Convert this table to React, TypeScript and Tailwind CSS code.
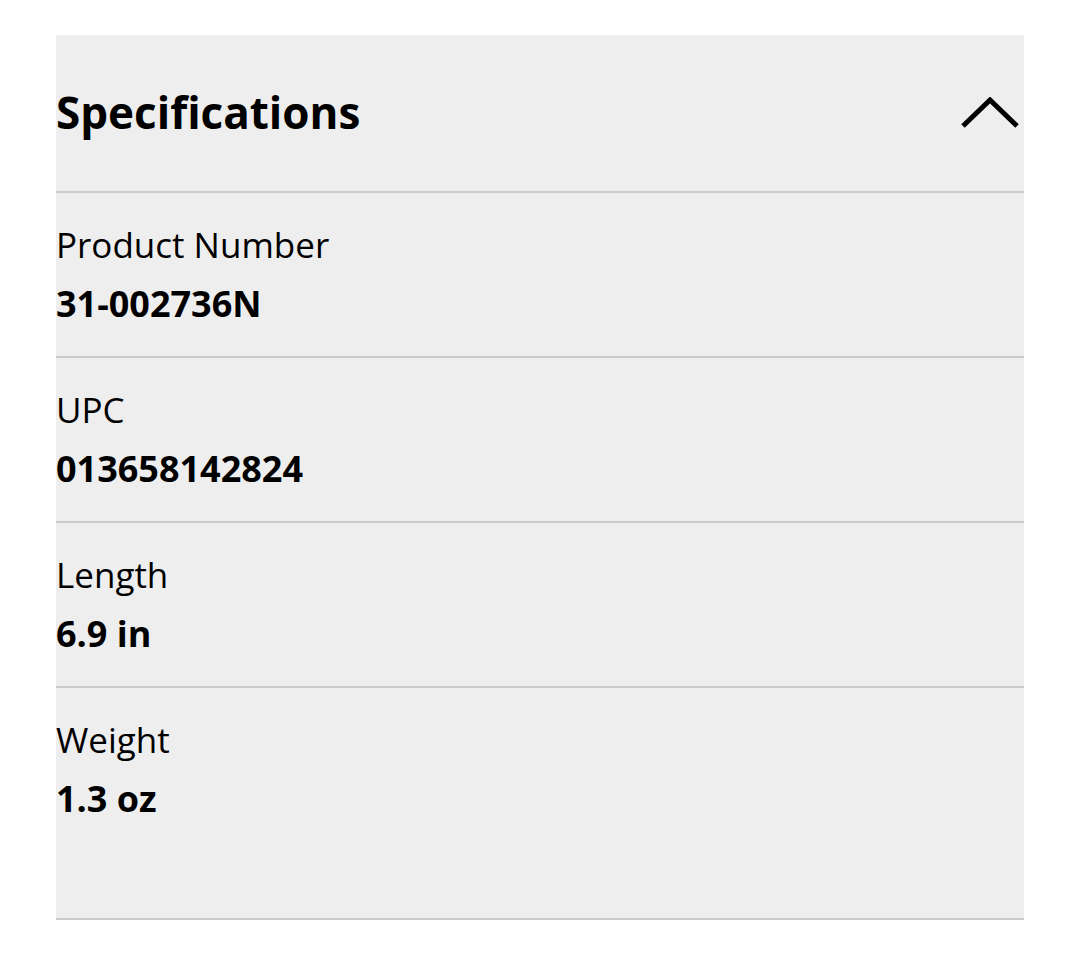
const specs = [
  { label: 'Product Number', value: '31-002736N' },
  { label: 'UPC', value: '013658142824' },
  { label: 'Length', value: '6.9 in' },
  { label: 'Weight', value: '1.3 oz' },
]

function ChevronUp() {
  return (
    <svg width="60" height="34" viewBox="0 0 60 34" fill="none">
      <polyline points="3,29 30,3 57,29" stroke="#000" strokeWidth="5" />
    </svg>
  )
}

export default function App() {
  return (
    <div className="min-h-[956px] bg-white px-[56px] pt-[35px] text-black" style={{ fontFamily: '"Open Sans", "Noto Sans", sans-serif' }}>
      <section className="bg-[#eeeeee] border-b-2 border-[#cccccc]">
        <div className="flex h-[156px] items-center justify-between">
          <h2 className="-mt-[3px] text-[44px] font-bold leading-none">Specifications</h2>
          <div className="mr-[4px] mt-[2px]">
            <ChevronUp />
          </div>
        </div>
        {specs.map((spec, i) => (
          <div
            key={spec.label}
            className={`border-t-2 border-[#cccccc] pt-[30px] ${i === specs.length - 1 ? 'pb-[97px]' : 'pb-[30px]'}`}
          >
            <p className="text-[35px] leading-[44px]">{spec.label}</p>
            <p className="mt-[15px] text-[36px] font-bold leading-[44px]">{spec.value}</p>
          </div>
        ))}
      </section>
    </div>
  )
}
